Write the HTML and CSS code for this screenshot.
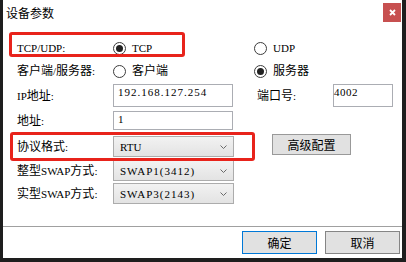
FILE: index.html
```html
<!DOCTYPE html>
<html lang="zh">
<head>
<meta charset="utf-8">
<title>设备参数</title>
<link rel="stylesheet" href="styles.css">
</head>
<body>
<div class="window">
  <div class="titlebar">
    <span class="title">设备参数</span>
    <div class="close"><svg width="7" height="7" viewBox="0 0 7 7"><path d="M1 1L6 6M6 1L1 6" stroke="#fff" stroke-width="1.8"/></svg></div>
  </div>
  <div class="form">
    <div class="row r1">
      <div class="label"><span class="en">TCP/UDP:</span></div>
      <div class="opt col2"><span class="radio on"></span><span class="en">TCP</span></div>
      <div class="opt"><span class="radio"></span><span class="en">UDP</span></div>
    </div>
    <div class="row r2">
      <div class="label">客户端<span class="en">/</span>服务器<span class="en">:</span></div>
      <div class="opt col2"><span class="radio"></span><span>客户端</span></div>
      <div class="opt"><span class="radio on"></span><span>服务器</span></div>
    </div>
    <div class="row r3">
      <div class="label"><span class="en">IP</span>地址<span class="en">:</span></div>
      <div class="field ip"><span class="en">192.168.127.254</span></div>
      <div class="label port-label">端口号<span class="en">:</span></div>
      <div class="field port"><span class="en">4002</span></div>
    </div>
    <div class="row r4">
      <div class="label">地址<span class="en">:</span></div>
      <div class="field"><span class="en">1</span></div>
    </div>
    <div class="row r5">
      <div class="label">协议格式<span class="en">:</span></div>
      <div class="combo"><span class="en">RTU</span><svg width="7" height="4" viewBox="0 0 7 4"><path d="M0.5 0.5L3.5 3.5L6.5 0.5" fill="none" stroke="#6a6a6a" stroke-width="1"/></svg></div>
      <button class="btn adv">高级配置</button>
    </div>
    <div class="row r6">
      <div class="label">整型<span class="en">SWAP</span>方式<span class="en">:</span></div>
      <div class="combo"><span class="en wide">SWAP1(3412)</span><svg width="7" height="4" viewBox="0 0 7 4"><path d="M0.5 0.5L3.5 3.5L6.5 0.5" fill="none" stroke="#6a6a6a" stroke-width="1"/></svg></div>
    </div>
    <div class="row r7">
      <div class="label">实型<span class="en">SWAP</span>方式<span class="en">:</span></div>
      <div class="combo"><span class="en wide">SWAP3(2143)</span><svg width="7" height="4" viewBox="0 0 7 4"><path d="M0.5 0.5L3.5 3.5L6.5 0.5" fill="none" stroke="#6a6a6a" stroke-width="1"/></svg></div>
    </div>
  </div>
  <div class="footer">
    <button class="btn foot ok">确定</button>
    <button class="btn foot cancel">取消</button>
  </div>
  <div class="mark m1"></div>
  <div class="mark m2"></div>
</div>
</body>
</html>
```
FILE: styles.css
```css
html, body {
  margin: 0;
  padding: 0;
}
body {
  background: #1e1e1e;
  width: 406px;
  height: 262px;
  overflow: hidden;
  font-family: "Liberation Serif", "Noto Sans CJK SC", serif;
  font-size: 12px;
  color: #000;
}
.window {
  position: relative;
  margin-left: 3px;
  width: 399px;
  height: 258px;
  background: #fff;
  display: flex;
  flex-direction: column;
}
.titlebar {
  flex: none;
  height: 25px;
  display: flex;
  align-items: center;
  padding-left: 3px;
}
.title {
  font-family: "Noto Sans CJK SC", sans-serif;
  font-size: 12px;
  line-height: 14px;
}
.close {
  margin-left: auto;
  margin-right: 1px;
  width: 18px;
  height: 19px;
  background: #c75050;
  display: flex;
  align-items: center;
  justify-content: center;
}
.form {
  flex: 1;
  padding: 13px 0 0 14px;
}
.row {
  display: flex;
  align-items: center;
  height: 20px;
  margin-bottom: 3px;
}
.r3 { height: 23px; margin-bottom: 4px; }
.r4 { height: 19px; margin-bottom: 6px; }
.r5 { height: 21px; margin-bottom: 3px; }
.r6 { height: 21px; margin-bottom: 2px; }
.r7 { height: 21px; margin-bottom: 0; }
.label {
  flex: none;
  width: 96px;
  line-height: 14px;
  white-space: nowrap;
}
.en {
  font-size: 11px;
}
.en.wide {
  letter-spacing: 1px;
}
.opt {
  display: flex;
  align-items: center;
  gap: 6px;
  line-height: 14px;
  white-space: nowrap;
}
.col2 {
  width: 141px;
}
.radio {
  flex: none;
  width: 11px;
  height: 11px;
  border: 1px solid #3c3c3c;
  border-radius: 50%;
  background: #fff;
  display: flex;
  align-items: center;
  justify-content: center;
}
.radio.on::after {
  content: "";
  width: 7px;
  height: 7px;
  border-radius: 50%;
  background: #222;
}
.field {
  box-sizing: border-box;
  align-self: stretch;
  width: 120px;
  border: 1px solid #abadb3;
  padding: 0 4px;
  line-height: 14px;
  letter-spacing: 1px;
  background: #fff;
}
.port-label {
  margin-left: 24px;
  width: 76px;
}
.field.port {
  width: 60px;
  padding: 0;
  letter-spacing: 0.5px;
}
.combo {
  box-sizing: border-box;
  align-self: stretch;
  width: 121px;
  border: 1px solid #acacac;
  background: linear-gradient(#f2f2f2, #e3e3e3);
  display: flex;
  align-items: center;
  justify-content: space-between;
  padding: 0 6px 0 6px;
  line-height: 14px;
}
.btn {
  box-sizing: border-box;
  font-family: "Noto Sans CJK SC", sans-serif;
  font-size: 12px;
  line-height: 14px;
  color: #000;
  background: #e1e1e1;
  border: 1px solid #999;
  padding: 0;
  margin: 0;
}
.adv {
  width: 79px;
  height: 21px;
  margin-left: 38px;
  align-self: flex-start;
  margin-top: -2px;
}
.footer {
  flex: none;
  box-sizing: border-box;
  height: 32px;
  border-top: 1px solid #a0a0a0;
  display: flex;
  justify-content: flex-end;
  align-items: flex-start;
  gap: 8px;
  padding: 4px 2px 0 0;
}
.foot {
  width: 75px;
  height: 23px;
}
.ok {
  border-color: #0078d7;
}
.cancel {
  border-color: #858585;
}
.mark {
  position: absolute;
  box-sizing: border-box;
  border: 3px solid #e8231b;
  border-radius: 3px;
}
.m1 {
  left: 6px;
  top: 32px;
  width: 176px;
  height: 25px;
}
.m2 {
  left: 7px;
  top: 132px;
  width: 245px;
  height: 29px;
}
```
